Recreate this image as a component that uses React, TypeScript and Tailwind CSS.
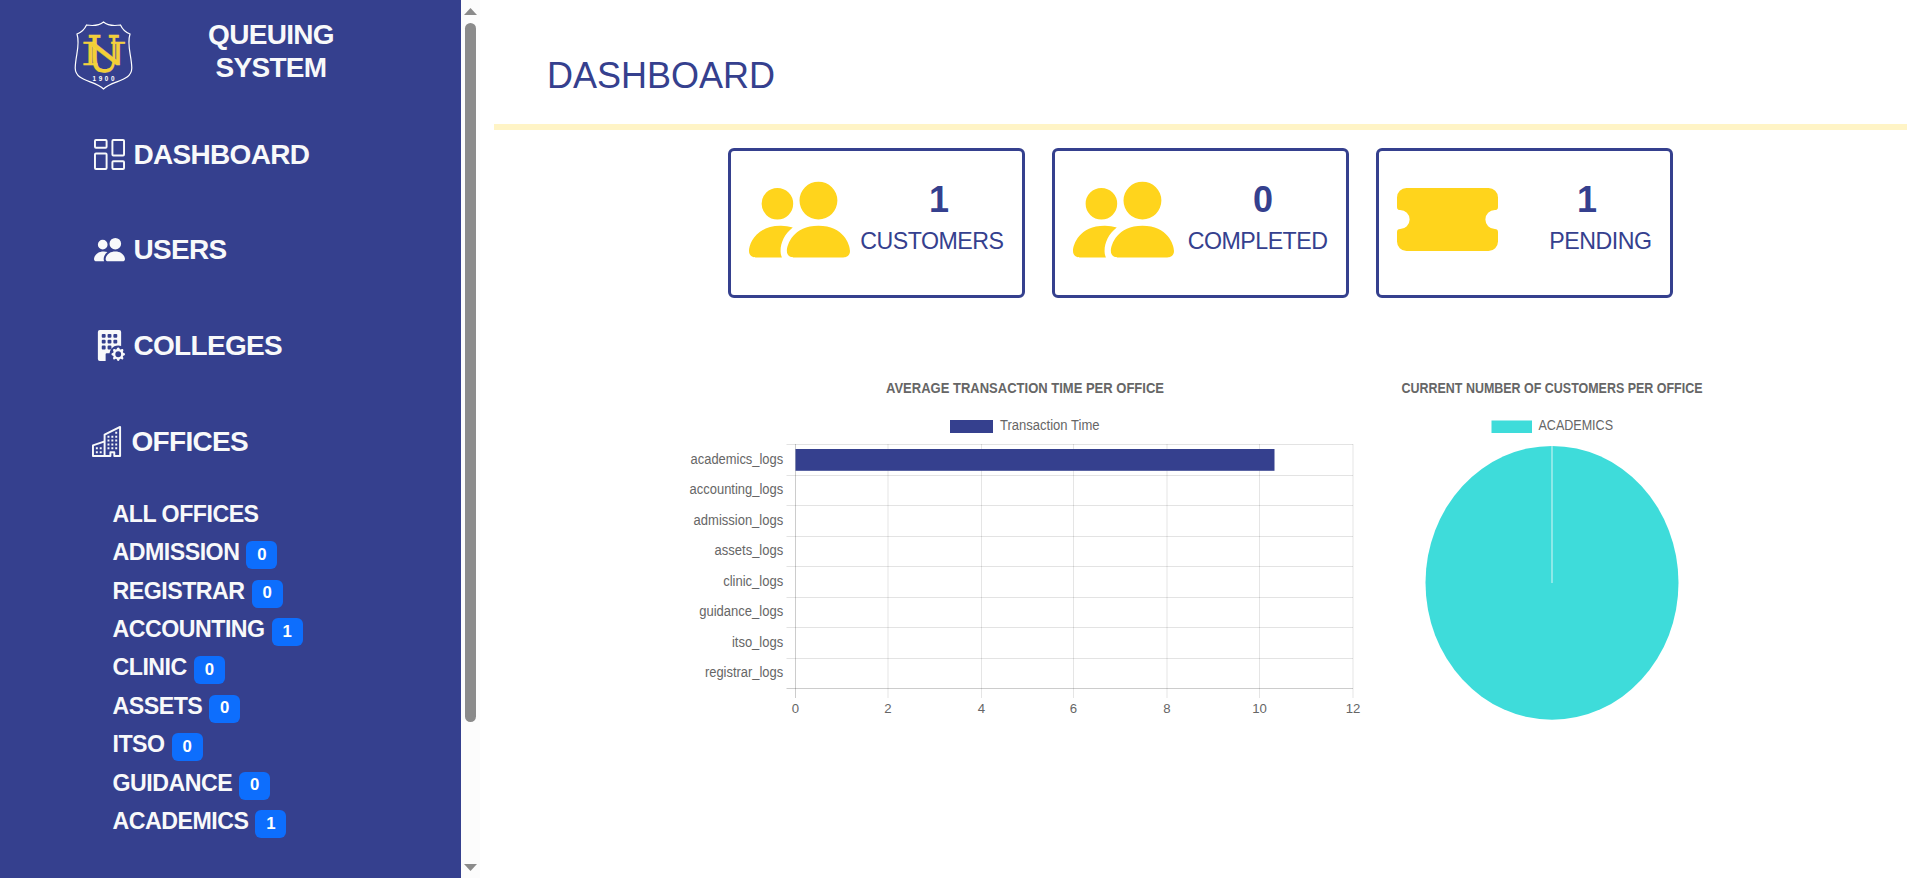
import { BsBuildingFillGear, BsBuildings, BsColumnsGap, BsPeopleFill, BsTicketFill } from "react-icons/bs";
import type { IconType } from "react-icons";

const FONT = "'Liberation Sans', Arial, sans-serif";

const nav: { label: string; icon: IconType; shift?: boolean }[] = [
  { label: "DASHBOARD", icon: BsColumnsGap },
  { label: "USERS", icon: BsPeopleFill },
  { label: "COLLEGES", icon: BsBuildingFillGear },
  { label: "OFFICES", icon: BsBuildings, shift: true },
];

const offices: { name: string; count?: number }[] = [
  { name: "ALL OFFICES" },
  { name: "ADMISSION", count: 0 },
  { name: "REGISTRAR", count: 0 },
  { name: "ACCOUNTING", count: 1 },
  { name: "CLINIC", count: 0 },
  { name: "ASSETS", count: 0 },
  { name: "ITSO", count: 0 },
  { name: "GUIDANCE", count: 0 },
  { name: "ACADEMICS", count: 1 },
];

const cards: { label: string; value: number; icon: IconType }[] = [
  { label: "CUSTOMERS", value: 1, icon: BsPeopleFill },
  { label: "COMPLETED", value: 0, icon: BsPeopleFill },
  { label: "PENDING", value: 1, icon: BsTicketFill },
];

const logs: { name: string; width: number }[] = [
  { name: "academics_logs", width: 92.6 },
  { name: "accounting_logs", width: 93.6 },
  { name: "admission_logs", width: 89.6 },
  { name: "assets_logs", width: 68.6 },
  { name: "clinic_logs", width: 60 },
  { name: "guidance_logs", width: 84 },
  { name: "itso_logs", width: 51.3 },
  { name: "registrar_logs", width: 78.3 },
];

const lineX = [125.5, 218, 311.5, 403.5, 497, 589.5, 683];
const lineY = [74.5, 105.5, 135.5, 166.5, 196.5, 227.5, 257.5, 288.5, 318.5];

function Crest() {
  return (
    <svg className="block h-[70px] w-[60px]" viewBox="0 0 60 70">
      <path
        d="M30.500 2 C27 5 20 6 13.500 5 C11.500 9.500 8 12.500 4 14 C7.500 25 2.500 35 2.200 48 C2.500 62 22 60 30.500 69 C39 60 58.500 62 58.800 48 C58.500 35 53.500 25 57 14 C53 12.500 49.500 9.500 47.500 5 C41 6 34 5 30.500 2 Z"
        fill="none"
        stroke="#fff"
        strokeWidth="1.2"
      />
      <g fontFamily="'DejaVu Serif', serif" fontWeight="400" fill="#f3cf35" stroke="#f3d75a" strokeWidth="0.3">
        <text x="14" y="52" fontSize="51" textLength="33.500" lengthAdjust="spacingAndGlyphs">U</text>
        <text x="8" y="44.500" fontSize="32" textLength="46" lengthAdjust="spacingAndGlyphs">N</text>
      </g>
      <text x="19.500" y="61.300" fontFamily={FONT} fontSize="6.300" fontWeight="700" fill="#fff" textLength="22">
        1900
      </text>
    </svg>
  );
}

function Sidebar() {
  return (
    <aside className="flex w-[461px] shrink-0 flex-col bg-[#35408e] font-bold text-[#f8f9fa]">
      <div className="flex h-[138.5px] pt-5 pl-[73px]">
        <Crest />
        <h3 className="-mt-[2px] ml-[63px] w-[150px] text-center text-[28px] leading-[33px] tracking-[-0.7px]">
          QUEUING SYSTEM
        </h3>
      </div>
      <nav className="flex flex-col gap-[64.7px] pl-[94px]">
        {nav.map(({ label, icon: Icon, shift }) => (
          <div
            key={label}
            className={`flex h-[31px] items-center gap-[8.500px] text-[28px] leading-[31px] tracking-[-0.7px] ${shift ? "-ml-[2px]" : ""}`}
          >
            <Icon className="size-[31px]" />
            <span>{label}</span>
          </div>
        ))}
      </nav>
      <ul className="mt-[38.4px] pl-[112.5px]">
        {offices.map(({ name, count }) => (
          <li key={name} className="flex h-[38.375px] gap-[7px] text-[23.2px] leading-[38.375px] tracking-[-0.5px]">
            <span>{name}</span>
            {count !== undefined && (
              <span className="mt-[8px] flex h-7 w-[31px] items-center justify-center rounded-md bg-[#0d6efd] text-[16.8px] leading-none tracking-normal text-white">
                {count}
              </span>
            )}
          </li>
        ))}
      </ul>
    </aside>
  );
}

function ScrollTrack() {
  return (
    <div className="flex w-[19px] shrink-0 flex-col items-center bg-[#fcfcfc]">
      <svg className="mt-2 block h-[7px] w-[13px]" viewBox="0 0 13 7">
        <path d="M6.500 0 13 7H0z" fill="#8b8b8b" />
      </svg>
      <div className="mt-2 h-[699px] w-[11px] rounded-full bg-[#8b8b8b]" />
      <svg className="mt-auto mb-[7px] block h-[7px] w-[13px]" viewBox="0 0 13 7">
        <path d="M0 0h13L6.500 7z" fill="#8b8b8b" />
      </svg>
    </div>
  );
}

function BarChart() {
  return (
    <svg className="block h-[360px] w-[700px] shrink-0" viewBox="0 0 700 360" fontFamily={FONT} fontSize="13.800" fill="#666">
      <text x="216" y="23" fontWeight="700" textLength="278" lengthAdjust="spacingAndGlyphs">
        AVERAGE TRANSACTION TIME PER OFFICE
      </text>
      <rect x="280" y="50" width="43" height="13" fill="#35408e" />
      <text x="330" y="60" textLength="99.500" lengthAdjust="spacingAndGlyphs">Transaction Time</text>
      {lineX.map((x, i) => (
        <line key={x} x1={x} x2={x} y1="74" y2="328" stroke="#000" strokeOpacity={i === 0 ? 0.2 : 0.1} />
      ))}
      {lineY.map((y, i) => (
        <line key={y} x1="116.500" x2="683" y1={y} y2={y} stroke="#000" strokeOpacity={i === 8 ? 0.2 : 0.11} />
      ))}
      <rect x="125.500" y="79" width="479" height="21.800" fill="#35408e" />
      {logs.map(({ name, width }, i) => (
        <text key={name} x={113.2 - width} y={93.9 + i * 30.5} textLength={width} lengthAdjust="spacingAndGlyphs">
          {name}
        </text>
      ))}
      {lineX.map((x, i) => (
        <text key={x} x={x} y="342.700" fontSize="13.200" textAnchor="middle">{i * 2}</text>
      ))}
    </svg>
  );
}

function PieChart() {
  return (
    <svg className="block h-[360px] w-[400px] shrink-0" viewBox="0 0 400 360" fontFamily={FONT} fontSize="13.800" fill="#666">
      <text x="31.500" y="23" fontWeight="700" textLength="301" lengthAdjust="spacingAndGlyphs">
        CURRENT NUMBER OF CUSTOMERS PER OFFICE
      </text>
      <rect x="121.500" y="50.500" width="40.500" height="12.500" fill="#3edcda" />
      <text x="168.500" y="60" textLength="74.500" lengthAdjust="spacingAndGlyphs">ACADEMICS</text>
      <ellipse cx="182" cy="212.800" rx="126.500" ry="136.900" fill="#3edcda" />
      <line x1="182" x2="182" y1="76" y2="213" stroke="#9bebea" strokeWidth="1.700" />
    </svg>
  );
}

export default function App() {
  return (
    <div className="flex h-[878px] w-full overflow-hidden bg-white font-['Liberation_Sans',Arial,sans-serif]">
      <Sidebar />
      <ScrollTrack />
      <main className="flex min-w-0 flex-1 flex-col pr-[13px] pl-[14px] text-[#35408e]">
        <h1 className="h-[124px] pt-[54px] pl-[53px] text-4xl leading-[43px]">DASHBOARD</h1>
        <hr className="h-[6px] shrink-0 border-0 bg-[#fff4c6]" />
        <section className="mt-[18px] ml-[234px] flex gap-[27px]">
          {cards.map(({ label, value, icon: Icon }) => (
            <div key={label} className="flex h-[150px] w-[297px] justify-between rounded-md border-[3px] border-[#35408e] pt-[18px] pr-[17px] pl-[18px]">
              <Icon className="size-[101px] shrink-0 text-[#ffd41c]" />
              <div className="flex flex-col items-end pt-[9px]">
                <span className="w-[132px] text-center text-4xl leading-[43px] font-bold">{value}</span>
                <span className="pr-[1.5px] text-[23.2px] leading-[40px] tracking-[-0.5px]">{label}</span>
              </div>
            </div>
          ))}
        </section>
        <section className="mt-[72px] ml-[176px] flex">
          <BarChart />
          <PieChart />
        </section>
      </main>
    </div>
  );
}
